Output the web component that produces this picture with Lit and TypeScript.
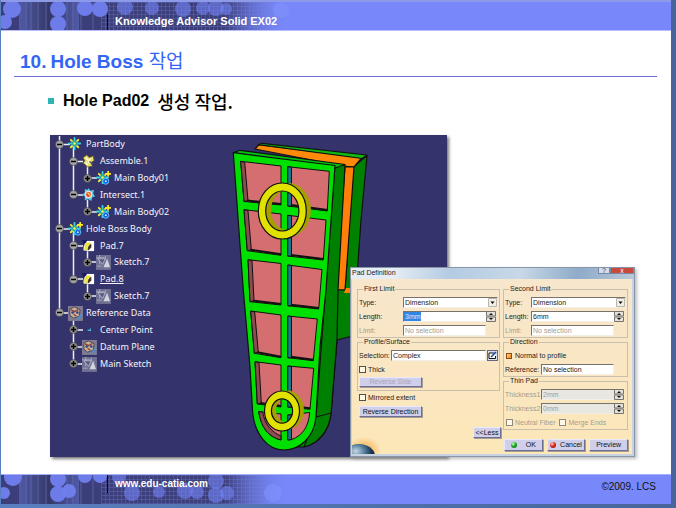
import { LitElement, html, svg, css, nothing } from "lit";
import { customElement } from "lit/decorators.js";

type IconName = "gear" | "gearStar" | "assemble" | "intersect" | "pad" | "sketch" | "plane" | "point";
interface TreeNode {
  label: string;
  depth: number;
  icon: IconName;
  open?: boolean;
  current?: boolean;
}

const TREE: TreeNode[] = [
  { label: "PartBody", depth: 0, icon: "gear", open: true },
  { label: "Assemble.1", depth: 1, icon: "assemble", open: true },
  { label: "Main Body01", depth: 2, icon: "gearStar" },
  { label: "Intersect.1", depth: 1, icon: "intersect", open: true },
  { label: "Main Body02", depth: 2, icon: "gearStar" },
  { label: "Hole Boss Body", depth: 0, icon: "gearStar", open: true },
  { label: "Pad.7", depth: 1, icon: "pad", open: true },
  { label: "Sketch.7", depth: 2, icon: "sketch" },
  { label: "Pad.8", depth: 1, icon: "pad", open: true, current: true },
  { label: "Sketch.7", depth: 2, icon: "sketch" },
  { label: "Reference Data", depth: 0, icon: "plane", open: true },
  { label: "Center Point", depth: 1, icon: "point" },
  { label: "Datum Plane", depth: 1, icon: "plane" },
  { label: "Main Sketch", depth: 1, icon: "sketch" },
];

const gear = svg`
  <g stroke-linecap="round" stroke-width="2">
    <path d="M7 1v12M1 7h12" stroke="#39d3e0"/>
    <path d="M3 3l8 8M11 3l-8 8" stroke="#e8ee3c"/>
  </g>
  <circle cx="7" cy="7" r="3" fill="#2aa9a0"/>
  <circle cx="7" cy="7" r="1.3" fill="#f2f25a"/>`;
const star = svg`
  <circle cx="10.500" cy="11" r="3.200" fill="#0a5fe0" stroke="#6cc4ff" stroke-width="1"/>
  <circle cx="10.500" cy="11" r="1.100" fill="#cfeaff"/>
  <path d="M13 0v6M10 3h6" stroke="#ffee22" stroke-width="1.800"/>`;

const ICONS: Record<IconName, unknown> = {
  gear,
  gearStar: svg`${gear}${star}`,
  assemble: svg`
    <path d="M1 4l4-3 3 3 4-2 1 5-3 2 1 4-5 1-3-3-2-1 2-3z" fill="#e8df62" stroke="#5b5526" stroke-width="0.800"/>
    <path d="M4 4l3 3M9 4l-2 6M4 9l2 3" stroke="#fff" stroke-width="1.300"/>
    <path d="M8 8l4 3" stroke="#4a4770" stroke-width="1.500"/>`,
  intersect: svg`
    <path d="M7 0l2 3 4-1-1 4 2 3-3 1-1 4-3-2-4 1 0-4-3-2 3-2 0-4 3 1z" fill="#54c8ee"/>
    <circle cx="7" cy="7" r="4" fill="#f3e2c0"/>
    <circle cx="7" cy="7" r="2.600" fill="#e0402c"/>
    <path d="M6 5l3 3" stroke="#ffd24a" stroke-width="1.400"/>`,
  pad: svg`
    <path d="M0 1h13v12H4" fill="#1a1c62"/>
    <path d="M5 2h8v11H5z" fill="#fff"/>
    <path d="M2 12c0-5 1-9 6-9l2 2c-3 1-4 4-4 7z" fill="#f0e13c" stroke="#fff" stroke-width="0.800"/>
    <path d="M6 12c0-3 1-6 4-7v4l-3 3z" fill="#3d3b20"/>`,
  sketch: svg`
    <rect width="16" height="16" fill="#6f7192"/>
    <path d="M0 3h9M4 0v10M1 12h5M10 1v4" stroke="#a9abc2" stroke-width="1"/>
    <path d="M2 4l8 0-3 6z" fill="#595b80" stroke="#c6c7d6" stroke-width="0.800"/>
    <path d="M8 13l4-9 3 9z" fill="#d2d3df"/>`,
  plane: svg`
    <rect width="16" height="16" fill="#7d7c92"/>
    <path d="M2 3l5-2 6 3-1 7-6 2-4-3z" fill="#c4b49c" stroke="#4d3f4c" stroke-width="1"/>
    <path d="M3 4l4 2 4-2M6 9l3 2" stroke="#983d3a" stroke-width="1.500" fill="none"/>
    <circle cx="5" cy="7" r="1.500" fill="#3a4c88"/><circle cx="10" cy="7" r="1.500" fill="#3a4c88"/>
    <path d="M10 14l5-5" stroke="#4c8fd8" stroke-width="2"/>`,
  point: svg`<path d="M6 8h3V6" stroke="#3fb8d8" stroke-width="1.300" fill="none"/>`,
};

const ring = (cx: number, cy: number, rx: number, ry: number, ix: number, iy: number) =>
  `M${cx - rx} ${cy}a${rx} ${ry} 0 1 0 ${2 * rx} 0a${rx} ${ry} 0 1 0 ${-2 * rx} 0z` +
  `M${cx - ix} ${cy}a${ix} ${iy} 0 1 0 ${2 * ix} 0a${ix} ${iy} 0 1 0 ${-2 * ix} 0z`;

const LEFT_POCKETS = [
  [[240.7, 161.3], [281, 166], [281, 205], [244, 201.5]],
  [[244, 209.7], [281, 214], [281, 255.3], [247.3, 250.7]],
  [[248, 259.7], [281, 263.5], [281, 305], [250, 301.7]],
  [[250.7, 311], [281, 315], [281, 357.7], [254.3, 353.3]],
  [[255, 361.7], [281, 365], [281, 407], [257.3, 404]],
];
const RIGHT_POCKETS = [
  [[287.7, 166.7], [329.3, 171.3], [327.3, 211], [287.7, 206]],
  [[287.7, 215.3], [326, 220], [323.3, 260], [287.7, 256]],
  [[287.7, 265], [322, 269.5], [318.7, 309], [287.7, 305.7]],
  [[287.7, 316], [317.3, 319], [313.3, 360.7], [287.7, 357.7]],
  [[287.7, 366], [313.7, 368.3], [310, 409.3], [287.7, 407]],
];
const pts = (p: number[][]) => p.map((q) => q.join(",")).join(" ");

@customElement("cad-model")
class CadModel extends LitElement {
  static styles = css`
    :host { display: block; }
    svg { display: block; width: 100%; height: 100%; }
  `;
  render() {
    return html`<svg viewBox="50 135 397 322" role="img" aria-label="Hole boss part">
      <g stroke="#111" stroke-width="1.2" stroke-linejoin="round">
        <polygon points="353,167 367,155.7 361,220 356,290 345,290" fill="#008200"/>
        <polygon points="255,149 259,144.7 362,157.5 354,167 343,166" fill="#ff8a0a"/>
        <polygon points="258,144.7 262,143.3 367,155 362,158.5" fill="#10b810"/>
        <polygon points="345,167 354,167 345,290 336,290" fill="#ff7f0a"/>
        <path d="M326 290h30v45l-19 5-6 74c-3 20-14 30-27 33l-20 0z" fill="#008000"/>
        <path d="M335 164.300l10 0.700-7 125-1 50-6 74c-2 18-14 30-27 33l12-30z" fill="#008000"/>
        <polygon points="346,288 353,288 352,293 344,293" fill="#ff7f0a" stroke="none"/>
        <polygon points="233.300,152.700 240,150.300 345,164.500 335,168" fill="#00c010"/>
        <path d="M233.300 152.700L335 165.500 326 290 320 347 316 417c-2 20-16 33-32 33-17 0-29-16-31.300-37L250 367 243.300 290z" fill="#00e000"/>
      </g>
      <g stroke="#111" stroke-width="1">
        ${LEFT_POCKETS.map((p) => svg`
          <polygon points=${pts(p)} fill="#d46e70"/>
          <polygon points=${pts([p[0], [p[0][0] + 4, p[0][1] + 1], [p[3][0] + 4, p[3][1] - 1], p[3]])} fill="#8a4c50"/>
          <path d="M${p[3][0] + 3} ${p[3][1] - 1}L${p[2][0]} ${p[2][1] - 1}" stroke-width="2"/>`)}
        ${RIGHT_POCKETS.map((p) => svg`
          <polygon points=${pts(p)} fill="#d46e70"/>
          <polygon points=${pts([p[0], [291.5, p[0][1] + 0.5], [291.5, p[3][1]], p[3]])} fill="#17788a"/>
          <path d="M291 ${p[3][1] - 1}L${p[2][0]} ${p[2][1] - 1}" stroke-width="2"/>`)}
        <path d="M258.700 411.700L281 414v26c-13-3-20-13-22.300-28.300z" fill="#d46e70"/>
        <path d="M258.700 411.700l4 0.500c2 12 9 20 18.300 23.800v4c-13-3-20-13-22.300-28.300z" fill="#8a4c50"/>
        <path d="M287.700 415l22-2.500c-1 14-7 23-18 27l-4 0.500z" fill="#d46e70"/>
        <path d="M287.700 415h3.800v24.500l-3.800 0.500z" fill="#17788a"/>
        <path d="M316 417l15-4"/>
      </g>
      <g fill-rule="evenodd" stroke-width="1.2">
        <path d=${ring(288, 210, 23, 27, 17, 20)} fill="#a3a000"/>
        <path d=${ring(282.3, 211, 24, 28, 16.6, 20)} fill="#e2e200" stroke="#111"/>
        <path d=${ring(287, 410, 17, 19.5, 11, 12.5)} fill="#a3a000"/>
        <path d=${ring(282, 411, 17.5, 20, 10.6, 12.2)} fill="#e2e200" stroke="#111"/>
      </g>
    </svg>`;
  }
}

@customElement("spec-tree")
class SpecTree extends LitElement {
  static styles = css`
    :host { display: grid; height: 236px; color: #f4f4fa; font: 9px/16px "Noto Sans", "Open Sans", sans-serif; }
    .wires, ul { grid-area: 1 / 1; }
    .wires { display: block; width: 60px; height: 236px; overflow: visible; }
    ul { list-style: none; margin: 0; padding: 0; display: grid; grid-auto-rows: minmax(0, 1fr); }
    li { display: flex; align-items: center; gap: 4px; white-space: nowrap; min-height: 0; }
    .d1 { padding-left: 14px; }
    .d2 { padding-left: 28px; }
    .knob { width: 9px; height: 9px; flex: none; }
    .icon { width: 14px; height: 14px; flex: none; overflow: visible; }
    .current { text-decoration: underline; }
  `;
  render() {
    return html`
      <svg class="wires" viewBox="0 0 60 236" stroke="#eee" stroke-width="1.500" fill="none" aria-hidden="true">
        <path d="M4.500 0V177M18.500 9V59M18.500 93V143M18.500 177V228"/>
        <path d="M32.500 30V42M32.500 64V76M32.500 110V126M32.500 145V160"/>
        <path d="M5 8.500h10M5 93h10M5 177h10M19 25.500h9M19 59h9M19 110h9M19 143h9M19 194h9M19 211h9M19 228h9M33 42h9M33 76h9M33 126h9M33 160h9"/>
      </svg>
      <ul>
        ${TREE.map((n) => html`<li class="d${n.depth}">
          <svg class="knob" viewBox="0 0 9 9" aria-hidden="true">
            <circle cx="4.500" cy="4.500" r="4" fill=${n.open ? "#a5a5a5" : "#8b8b8b"} stroke="#3a3a3a" stroke-width="0.500"/>
            <path d="M2 4.500h5" stroke="#000" stroke-width="1.500"/>
            ${n.open ? nothing : svg`<path d="M4.500 2v5" stroke="#000" stroke-width="1.500"/>`}
          </svg>
          <svg class="icon" viewBox="0 0 15 15" aria-hidden="true">${ICONS[n.icon]}</svg>
          <span class=${n.current ? "current" : ""}>${n.label}</span>
        </li>`)}
      </ul>`;
  }
}

const spinner = html`<svg class="spin" viewBox="0 0 10 11" aria-hidden="true">
  <path d="M0.500 0.500h9v4.500h-9zM0.500 6h9v4.500h-9z" fill="#e4e1da" stroke="#77736c" stroke-width="1"/>
  <path d="M3 4l2-2 2 2zM3 7l2 2 2-2z" fill="#111"/></svg>`;

@customElement("pad-dialog")
class PadDialog extends LitElement {
  static styles = css`
    :host {
      display: flex; flex-direction: column; box-sizing: border-box;
      border: 1px solid #8795a8; padding: 0 2px 2px 1px; background: #c4d2e2;
      box-shadow: 2px 2px 3px #8888;
      font: 7px/10px "Liberation Sans", sans-serif; color: #222;
    }
    * { box-sizing: border-box; }
    .bar { display: flex; justify-content: space-between; height: 11px; margin: 0 -2px 0 -1px;
      background: linear-gradient(100deg, #e6edf4 0 15%, #b4cbe2 35%, #c8d8e8 60%, #8fabc9 80%, #b9c9da); }
    .name { margin: 0; padding-left: 1px; font: inherit; }
    .caps { display: flex; height: 6px; }
    .caps button { border: 1px solid #7789a0; border-top: 0; padding: 0; width: 12px; background: #d4deea;
      font: 7px/5px "Liberation Sans", sans-serif; color: #445; overflow: hidden; }
    .caps .close { width: 24px; background: #c9493b; color: #fff; }
    .body { position: relative; flex: 1; display: grid; grid-template-columns: 143fr 125fr; gap: 3px;
      padding: 6px 4px 4px 5px; background: linear-gradient(#f8e6cd, #fce7b8); overflow: hidden; }
    .planet { position: absolute; left: 0; bottom: 0; width: 32px; height: 18px; }
    .col { position: relative; display: flex; flex-direction: column; }
    fieldset { margin: 0; border: 1px solid #c9bfae; padding: 3px 1px 0; min-width: 0; display: block; }
    legend { margin-left: 4px; padding: 0 1px; line-height: 8px; }
    .rows { display: grid; grid-auto-rows: 13px; row-gap: 1px; }
    .row { display: grid; align-items: center; grid-template-columns: 44px 1fr; }
    .short { grid-template-columns: 26px 1fr; }
    .mid { grid-template-columns: 32px 1fr; }
    .long { grid-template-columns: 36px 1fr; }
    .off { color: #a39d93; }
    .box { display: grid; align-items: center; }
    .box > * { grid-area: 1 / 1; }
    input, select { font: inherit; color: inherit; }
    .text { appearance: none; width: 100%; height: 11px; margin: 0; padding: 0 1px; border: 1px solid;
      border-color: #77736c #f4efe6 #f4efe6 #77736c; border-radius: 0; background: #fff; outline: 0; opacity: 1; }
    .picked { color: #dcecff; background: linear-gradient(#3186e4, #3186e4) 0 0 / 17px 9px no-repeat #fff; }
    .grey { background: #e9e7e2; }
    .trim { padding-right: 12px; }
    .end { padding-right: 2px; }
    .spin, .drop { width: 10px; height: 11px; justify-self: end; pointer-events: none; }
    .pick { display: flex; align-items: center; gap: 1px; }
    .edit { flex: none; width: 11px; height: 11px; padding: 0; border: 0; background: none; }
    .edit svg { display: block; width: 11px; height: 11px; }
    .tick { display: flex; align-items: center; gap: 2px; }
    .tick input { appearance: none; width: 7px; height: 7px; margin: 0; border: 1px solid #55504a; background: #fdf8e8; flex: none; }
    .tick .lit { width: 6px; height: 6px; margin: 0 1px; border-color: #8a4a10; background: linear-gradient(135deg, #ffd890, #ef7d10); }
    .off .tick input { border-color: #8f897f; }
    .mirror { height: 13px; padding-left: 2px; }
    .pair { display: flex; gap: 4px; padding-left: 1px; }
    .btn { font: inherit; color: #111; height: 11px; padding: 0; border: 1px solid;
      border-color: #e9e9fb #6f6f96 #6f6f96 #e9e9fb; background: #cfcfea; display: flex; align-items: center;
      justify-content: center; gap: 9px; box-shadow: 1px 1px 0 #a39d93; }
    .wide { width: 63px; }
    .btn:disabled { color: #a5a5be; height: 10px; }
    .side { margin: 2px 0 0 2px; }
    .less { width: 28px; margin: 10px -1px 0 auto; }
    .acts { display: grid; grid-template-columns: repeat(3, 1fr); gap: 4px; margin-top: 9px; padding-left: 1px; }
    .acts .btn { height: 12px; }
    .led { width: 6px; height: 6px; border-radius: 50%; background: radial-gradient(circle at 35% 30%, #d6ffd6, #1cae1c 45%, #0b5a0b); }
    .red { background: radial-gradient(circle at 35% 30%, #ffd6d0, #e0281c 45%, #7c0b05); }
    .acts .tight { gap: 4px; }
  `;
  private dropdown(size: "" | "short") {
    return html`<label class="row ${size}"><span>Type:</span>
      <span class="box"><select class="text"><option>Dimension</option></select>
      <svg class="drop" viewBox="0 0 10 11" aria-hidden="true"><path d="M0.500 1.500h8v8h-8z" fill="#f1eee8" stroke="#b9b5ad"/><path d="M2.500 4.500h4l-2 2.500z" fill="#000"/></svg></span></label>`;
  }
  render() {
    return html`
      <header class="bar"><h3 class="name">Pad Definition</h3>
        <span class="caps"><button aria-label="Help">?</button><button class="close" aria-label="Close">x</button></span></header>
      <div class="body">
        <svg class="planet" viewBox="0 0 32 18" aria-hidden="true">
          <defs><radialGradient id="glow"><stop offset="0.500" stop-color="#f5a63c"/><stop offset="1" stop-color="#f5a63c" stop-opacity="0"/></radialGradient>
          <radialGradient id="globe" cx="0.400" cy="0.300"><stop offset="0" stop-color="#c8d8e0"/><stop offset="0.500" stop-color="#5c86a4"/><stop offset="1" stop-color="#16324c"/></radialGradient></defs>
          <ellipse cx="12" cy="14" rx="17" ry="13" fill="url(#glow)" opacity="0.500"/>
          <ellipse cx="7" cy="20" rx="16" ry="12" fill="url(#globe)"/>
        </svg>
        <div class="col">
          <fieldset><legend>First Limit</legend><div class="rows">
            ${this.dropdown("")}
            <label class="row end"><span>Length:</span><span class="box"><input class="text picked" value="3mm">${spinner}</span></label>
            <label class="row off trim"><span>Limit:</span><input class="text" value="No selection" disabled></label>
          </div></fieldset>
          <fieldset><legend>Profile/Surface</legend><div class="rows">
            <div class="row mid"><label for="sel">Selection:</label><span class="pick"><input id="sel" class="text" value="Complex">
              <button class="edit" aria-label="Edit sketch"><svg viewBox="0 0 11 11" aria-hidden="true">
                <rect x="0.500" y="0.500" width="10" height="10" fill="#dfe0f0" stroke="#66668c"/>
                <path d="M7 3H2v5.500h6.500V6" fill="#fff" stroke="#111"/><path d="M4 7l5-5" stroke="#24489c" stroke-width="1.600"/></svg></button></span></div>
            <label class="tick"><input type="checkbox">Thick</label>
            <button class="btn wide" disabled>Reverse Side</button>
          </div></fieldset>
          <label class="tick mirror"><input type="checkbox">Mirrored extent</label>
          <button class="btn wide side">Reverse Direction</button>
          <button class="btn less">&lt;&lt;Less</button>
        </div>
        <div class="col">
          <fieldset><legend>Second Limit</legend><div class="rows">
            ${this.dropdown("short")}
            <label class="row short end"><span>Length:</span><span class="box"><input class="text" value="6mm">${spinner}</span></label>
            <label class="row short off trim"><span>Limit:</span><input class="text" value="No selection" disabled></label>
          </div></fieldset>
          <fieldset><legend>Direction</legend><div class="rows">
            <label class="tick"><input class="lit" type="checkbox" checked>Normal to profile</label>
            <label class="row long trim"><span>Reference:</span><input class="text" value="No selection"></label>
          </div></fieldset>
          <fieldset><legend>Thin Pad</legend><div class="rows">
            <label class="row long off end"><span>Thickness1</span><span class="box"><input class="text grey" value="2mm" disabled>${spinner}</span></label>
            <label class="row long off end"><span>Thickness2:</span><span class="box"><input class="text grey" value="0mm" disabled>${spinner}</span></label>
            <div class="pair off"><label class="tick"><input type="checkbox" disabled>Neutral Fiber</label><label class="tick"><input type="checkbox" disabled>Merge Ends</label></div>
          </div></fieldset>
          <div class="acts">
            <button class="btn"><span class="led"></span>OK</button>
            <button class="btn tight"><span class="led red"></span>Cancel</button>
            <button class="btn">Preview</button>
          </div>
        </div>
      </div>`;
  }
}

const DOTS = [[11, 7, 9], [57, 7, 8], [57, 22, 8], [84, 6, 8], [99, 7, 8], [4, 20, 7], [124, 5, 8], [151, 6, 7], [182, 7, 8], [202, 6, 7], [215, 6, 8], [225, 7, 6], [280, 8, 8]];
const LOW_DOTS = [[12, 2, 9], [57, 4, 8], [57, 19, 8], [68, 16, 7], [84, 1, 7], [99, 1, 7], [3, 18, 6], [118, 2, 7], [131, 18, 8], [158, 17, 6], [184, 16, 8], [196, 17, 7], [215, 6, 8], [215, 20, 8], [226, 18, 7], [272, 18, 9]];
const pattern = (id: string, dots: number[][]) => html`<svg class="pattern" viewBox="0 0 320 30" preserveAspectRatio="xMinYMin slice" aria-hidden="true">
  <defs>
    <linearGradient id="${id}f"><stop offset="0.700" stop-color="#3b3e78"/><stop offset="0.920" stop-color="#7888fa"/></linearGradient>
    <linearGradient id="${id}v"><stop offset="0.700" stop-color="#7888fa" stop-opacity="0"/><stop offset="0.900" stop-color="#7888fa"/></linearGradient>
    <pattern id="${id}g" width="4" height="4" patternUnits="userSpaceOnUse"><path d="M0 0.500h4M0.500 0v4" stroke="#6a76cc" stroke-width="0.800" opacity="0.500"/></pattern>
    <linearGradient id="${id}b"><stop offset="0" stop-color="#5a66b8"/><stop offset="0.500" stop-color="#32355f"/><stop offset="1" stop-color="#5a66b8"/></linearGradient>
  </defs>
  <rect width="320" height="30" fill="url(#${id}f)"/>
  <rect x="18" width="60" height="30" fill="url(#${id}b)" opacity="0.700"/>
  <rect x="100" width="200" height="30" fill="url(#${id}g)"/>
  <rect width="320" height="30" fill="url(#${id}v)"/>
  <path d="M25 0v30M30 0v30M37 0v30M45 0v30M66 0v30M72 0v30M80 0v30M92 0v30" stroke="#6a76c4" stroke-width="1" opacity="0.600"/>
  ${dots.map(([x, y, r]) => svg`<circle cx=${x} cy=${y} r=${r} fill=${x > 250 ? "#8090fc" : "#7080ee"} opacity=${x > 110 ? 0.65 : 0.95}/>`)}
</svg>`;

@customElement("app-root")
class AppRoot extends LitElement {
  static styles = css`
    :host { display: flex; flex-direction: column; box-sizing: border-box; min-height: 100vh; padding: 0 5px 4px 1px;
      background: linear-gradient(90deg, #5a7fc0, #48649a); font-family: "Liberation Sans", "Noto Sans CJK KR", sans-serif; }
    .band { display: grid; align-items: center; height: 31px; box-sizing: border-box; background: #7888fa; overflow: hidden; }
    .band > * { grid-area: 1 / 1; }
    .top { border-top: 2px solid #8c9ae8; border-bottom: 1px solid #b5bffc; }
    .foot { height: 30px; border-top: 1px solid #a5b1fb; }
    .pattern { width: 320px; height: 30px; align-self: start; }
    .head, .link { margin-left: 106px; padding-left: 7px; color: #fff; font-weight: 700; text-decoration: none; justify-self: start; z-index: 1; border-left: 1px solid #0a0a20; }
    .head { font-size: 11px; line-height: 14px; padding-bottom: 4px; align-self: end; }
    .link { font-size: 10px; line-height: 18px; align-self: start; }
    .copy { justify-self: end; padding: 0 15px 6px; color: #111; font-size: 10px; line-height: 14px; margin: 0; }
    main { flex: 1; background: #fff; padding: 0 14px 0 13px; }
    h1 { display: flex; align-items: baseline; gap: 4px; margin: 0; padding: 17px 0 2px 6px; border-bottom: 1px solid #6b6bd8; color: #3366f5; font-size: 19px; line-height: 24px; }
    h1 .ko, h2 .ko { font-weight: 400; font-family: "Noto Sans CJK KR", sans-serif; }
    h2 { display: flex; align-items: center; margin: 12px 0 22px 34px; font-size: 16px; line-height: 24px; color: #000; }
    h2::before { content: ""; width: 6px; height: 6px; margin-right: 9px; background: #2fb5b5; }
    h2 .ko { font-size: 18px; font-weight: 500; margin-left: 8px; }
    .stage { position: relative; display: grid; width: 397px; margin: 0 0 0 36px; background: #35336b; box-shadow: 2px 2px 3px #777; }
    .stage > cad-model, .stage > spec-tree { grid-area: 1 / 1; }
    cad-model { height: 322px; }
    spec-tree { align-self: start; padding: 1px 0 0 5px; }
    pad-dialog { position: absolute; left: 300px; top: 132px; width: 285px; height: 190px; }
  `;
  render() {
    return html`
      <header class="band top">${pattern("t", DOTS)}<span class="head">Knowledge Advisor Solid EX02</span></header>
      <main>
        <h1><span>10.</span><span>Hole Boss <span class="ko">작업</span></span></h1>
        <h2>Hole Pad02 <span class="ko">생성 작업.</span></h2>
        <figure class="stage">
          <cad-model></cad-model>
          <spec-tree></spec-tree>
          <pad-dialog role="dialog" aria-label="Pad Definition"></pad-dialog>
        </figure>
      </main>
      <footer class="band foot">${pattern("b", LOW_DOTS)}<a class="link" href="http://www.edu-catia.com">www.edu-catia.com</a><p class="copy">©2009. LCS</p></footer>`;
  }
}
